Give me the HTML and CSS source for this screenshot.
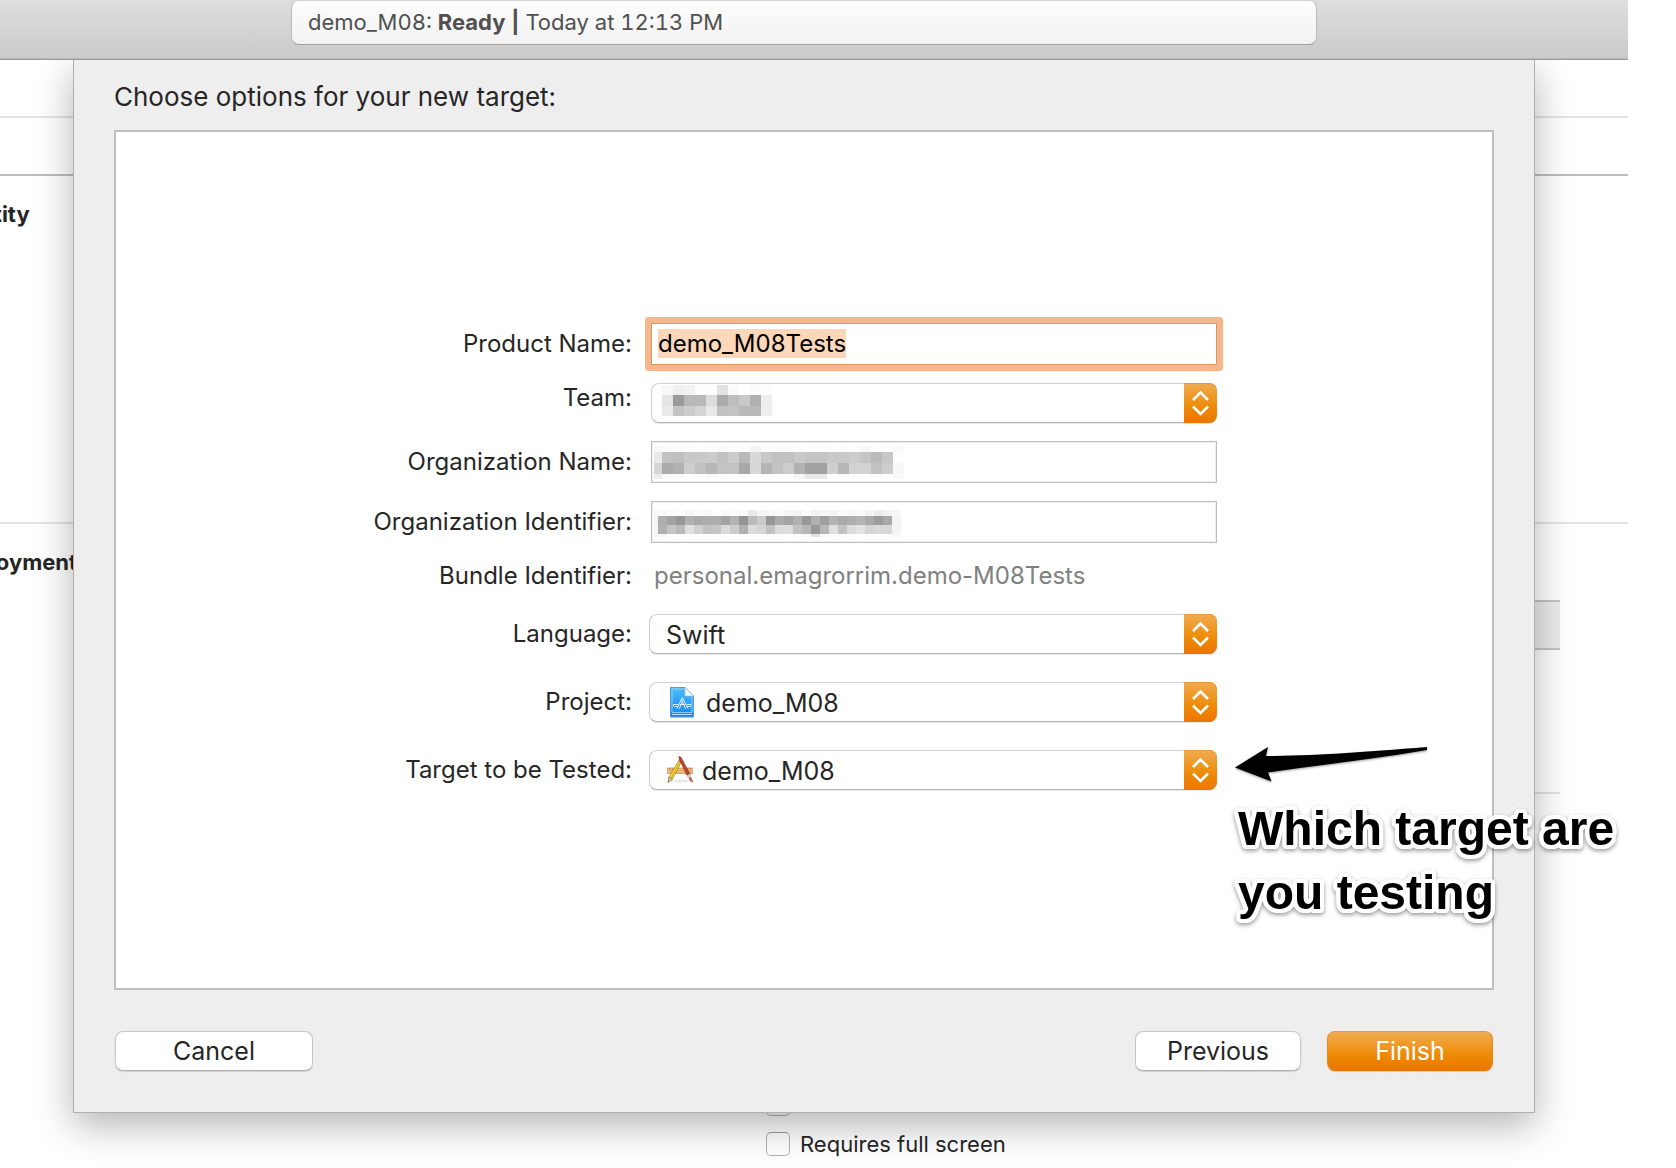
FILE: index.html
```
<!DOCTYPE html>
<html lang="en">
<head>
<meta charset="utf-8">
<title>demo_M08 – New Target</title>
<link rel="stylesheet" href="styles.css">
</head>
<body>
<div class="window">
  <header class="toolbar">
    <div class="status">demo_M08: <b>Ready |</b> Today at 12:13 PM</div>
  </header>

  <div class="stage">
    <main class="editor">
      <div class="bar"></div>
      <div class="bar bar-strong"></div>
      <section class="section section-identity">
        <h2 class="section-title">Identity</h2>
      </section>
      <section class="section">
        <h2 class="section-title">Deployment</h2>
        <div class="device-bar"></div>
        <hr class="divider">
        <div class="checks">
          <label class="check"><input type="checkbox"> Hide status bar</label>
          <label class="check"><input type="checkbox"> Requires full screen</label>
        </div>
      </section>
    </main>

    <form class="sheet">
      <h1 class="sheet-title">Choose options for your new target:</h1>
      <div class="panel">
        <div class="row">
          <label class="label" for="product">Product Name:</label>
          <div class="control inset">
            <input class="field focused" id="product" type="text" value="demo_M08Tests" spellcheck="false">
          </div>
        </div>
        <div class="row">
          <label class="label label-top" for="team">Team:</label>
          <div class="control inset">
            <select class="popup" id="team"><option></option></select>
            <svg class="mosaic" data-mosaic="team" aria-hidden="true"></svg>
            <svg class="cap" viewBox="0 0 33 40" aria-hidden="true"><path d="M9 17l7.500-7.500 7.500 7.500M9 23.500l7.500 7.500 7.500-7.500"/></svg>
          </div>
        </div>
        <div class="row">
          <label class="label" for="orgname">Organization Name:</label>
          <div class="control inset">
            <input class="field" id="orgname" type="text">
            <svg class="mosaic" data-mosaic="orgname" aria-hidden="true"></svg>
          </div>
        </div>
        <div class="row">
          <label class="label" for="orgid">Organization Identifier:</label>
          <div class="control inset">
            <input class="field" id="orgid" type="text">
            <svg class="mosaic" data-mosaic="orgid" aria-hidden="true"></svg>
          </div>
        </div>
        <div class="row row-text">
          <label class="label" for="bundle">Bundle Identifier:</label>
          <div class="control inset">
            <output class="value" id="bundle">personal.emagrorrim.demo-M08Tests</output>
          </div>
        </div>
        <div class="row row-popup">
          <label class="label" for="language">Language:</label>
          <div class="control">
            <select class="popup" id="language"><option>Swift</option></select>
            <svg class="cap" viewBox="0 0 33 40" aria-hidden="true"><path d="M9 17l7.500-7.500 7.500 7.500M9 23.500l7.500 7.500 7.500-7.500"/></svg>
          </div>
        </div>
        <div class="row row-popup">
          <label class="label" for="project">Project:</label>
          <div class="control">
            <select class="popup popup-project" id="project"><option>demo_M08</option></select>
            <svg class="icon icon-project" viewBox="0 0 24 31" aria-hidden="true">
              <defs><linearGradient id="doc" x1="0" y1="0" x2="0" y2="1"><stop offset="0" stop-color="#4dbcf5"/><stop offset="1" stop-color="#0f86fb"/></linearGradient></defs>
              <path d="M.5 .5H15L23.500 9V30H.5z" fill="url(#doc)" stroke="#4f9bd6" stroke-width="1"/>
              <path d="M14.500 2H2V25.500H22V10" fill="none" stroke="#a5dafb" stroke-width=".8"/>
              <path d="M2 27.500H22" stroke="#b9defc" stroke-width="1"/>
              <path d="M15 .5L23.500 9H15z" fill="#f4f6f8" stroke="#b9c4cc" stroke-width=".6"/>
              <path d="M7 21.500L12.300 10.500L18 21.500M9.200 21.800L13.500 12M15.500 21.800L11.200 12M3.500 17.500H8M4.500 19.500H8M17 17.500H20.500M16.500 19.500H20M9.500 17.500H15.500M3.500 17.500V19.500M20.500 17.500V19.500" fill="none" stroke="#d9f0ff" stroke-width="1"/>
            </svg>
            <svg class="cap" viewBox="0 0 33 40" aria-hidden="true"><path d="M9 17l7.500-7.500 7.500 7.500M9 23.500l7.500 7.500 7.500-7.500"/></svg>
          </div>
        </div>
        <div class="row row-popup">
          <label class="label" for="target">Target to be Tested:</label>
          <div class="control">
            <select class="popup popup-target" id="target"><option>demo_M08</option></select>
            <svg class="icon icon-target" viewBox="0 0 28 28" aria-hidden="true">
              <ellipse cx="14" cy="25" rx="11" ry="1.500" fill="#e9e9e9"/>
              <path d="M1 12H27V17.500H1z" fill="#e9b27a"/>
              <path d="M1 12H27M1 17.500H27" stroke="#c98f57" stroke-width=".7"/>
              <path d="M3.500 12V14M6.500 12V14M21.500 12V14M24.500 12V14" stroke="#b57d48" stroke-width=".6"/>
              <path d="M13.800 3L16.300 4.200L6.500 23L2 26.500L3 21z" fill="#f5d936" stroke="#8a7420" stroke-width=".6"/>
              <path d="M14.900 3.800L4.800 23" stroke="#c9a514" stroke-width=".8"/>
              <path d="M3 21L6.500 23L2 26.500z" fill="#d9c6a5" stroke="#6e6455" stroke-width=".5"/>
              <path d="M12.600 5.200L15.200 6.600L16.600 4L14 2.600z" fill="#ee5b62"/>
              <path d="M12.600 .5L15 1.200L24 18L21 19.500L14.500 6z" fill="#b8452a" stroke="#7d2c19" stroke-width=".5"/>
              <path d="M21 19.500L24 18L25 21L22.600 22z" fill="#d5d8da" stroke="#8f8f8f" stroke-width=".4"/>
              <path d="M22.600 22L25 21L27.300 26.300C25.500 26.500 23.800 25 22.600 22z" fill="#a8654c"/>
            </svg>
            <svg class="cap" viewBox="0 0 33 40" aria-hidden="true"><path d="M9 17l7.500-7.500 7.500 7.500M9 23.500l7.500 7.500 7.500-7.500"/></svg>
          </div>
        </div>
      </div>
      <footer class="actions">
        <button class="button button-cancel" type="button">Cancel</button>
        <button class="button" type="button">Previous</button>
        <button class="button button-primary" type="submit">Finish</button>
      </footer>
    </form>

    <aside class="note">
      <svg class="note-arrow" viewBox="0 0 194 38" aria-hidden="true">
        <path d="M0 21.500L33 1L31 10C75 10 130 6 192 1V4C140 13 85 19 33 26.500L36.500 35.500z"/>
      </svg>
      <p class="note-text">Which target are<br>you testing</p>
    </aside>
  </div>
</div>
<script src="script.js"></script>
</body>
</html>
```

FILE: styles.css
```
* {
  box-sizing: border-box;
}

body {
  margin: 0;
  background: #fff;
  color: #262626;
  font-family: Inter, "Liberation Sans", sans-serif;
  font-size: 24px;
  overflow: hidden;
}

.window {
  display: flex;
  flex-direction: column;
  min-height: 100vh;
}

/* Toolbar */

.toolbar {
  position: relative;
  z-index: 2;
  display: flex;
  height: 60px;
  margin-right: 48px;
  padding: 0 311px 14px 291px;
  background: linear-gradient(#dedede, #cacaca);
  border-bottom: 1px solid #9c9c9c;
  box-shadow: inset 0 -1px #b8b8b8;
}

.status {
  flex: 1;
  padding: 0 16px;
  border: 1px solid #bdbdbd;
  border-top-color: #d4d4d4;
  border-bottom-color: #a0a0a0;
  border-radius: 8px;
  background: linear-gradient(#fdfdfd, #f2f2f2);
  color: #505050;
  font-size: 22px;
  line-height: 42px;
  font-variant-numeric: tabular-nums;
}

/* Editor and sheet share one cell, the sheet on top */

.stage {
  position: relative;
  flex: 1;
  display: grid;
  grid-template-columns: minmax(0, 1fr);
  align-items: start;
}

.editor,
.sheet {
  grid-area: 1 / 1;
}

.editor {
  margin-right: 48px;
}

.bar {
  height: 58px;
  border-bottom: 2px solid #e3e3e3;
}

.bar-strong {
  border-bottom-color: #bdbdbd;
}

.section {
  padding-top: 23px;
}

.section-identity {
  padding-bottom: 293px;
  border-bottom: 2px solid #e3e3e3;
}

.section-title {
  margin: 0 0 0 -53px;
  font-size: 22px;
  line-height: 30px;
}

.device-bar {
  height: 50px;
  margin: 23px 68px 0 120px;
  border: solid #c4c4c4;
  border-width: 2px 0;
  background: #ececec;
}

.divider {
  height: 2px;
  margin: 142px 68px 0 120px;
  border: 0;
  background: #e3e3e3;
}

.checks {
  display: flex;
  flex-direction: column;
  gap: 16px;
  margin: 298px 0 0 766px;
}

.check {
  display: flex;
  align-items: center;
  gap: 10px;
  font-size: 22px;
  line-height: 24px;
}

.check input {
  appearance: none;
  width: 24px;
  height: 24px;
  margin: 0;
  border: 1px solid #b0b0b0;
  border-top-color: #9a9a9a;
  border-radius: 5px;
  background: #fff;
}

/* Sheet */

.sheet {
  z-index: 1;
  margin: 0 141px 0 73px;
  padding: 19px 40px 41px;
  border: solid #b0b0b0;
  border-width: 0 1px 1px;
  background: #eee;
  box-shadow: 0 12px 36px rgba(0, 0, 0, 0.3);
}

.sheet-title {
  margin: 0 0 15px;
  font-size: 26px;
  font-weight: 400;
  line-height: 36px;
}

.panel {
  display: flex;
  flex-direction: column;
  gap: 18px;
  padding: 191px 0 198px;
  border: 2px solid #bfbfbf;
  background: #fff;
}

.row {
  display: grid;
  grid-template-columns: 516fr 568fr 258fr;
  column-gap: 17px;
  align-items: center;
}

.row-text {
  margin-bottom: 5px;
}

.row-popup + .row-popup {
  margin-top: 10px;
}

.label {
  text-align: right;
  line-height: 30px;
}

.label-top {
  align-self: start;
}

.control {
  display: grid;
  grid-template-columns: minmax(0, 1fr);
  align-items: center;
}

.control > * {
  grid-area: 1 / 1;
}

.inset {
  margin-left: 2px;
}

.field {
  width: 100%;
  height: 42px;
  margin: 0;
  padding: 0 6px 2px;
  border: 1px solid #bcbcbc;
  border-radius: 0;
  outline: 0;
  background: #fff;
  box-shadow: inset 0 0 0 1px #f0f0f0;
  color: #000;
  font: 24px/30px Inter, "Liberation Sans", sans-serif;
}

.focused {
  border-color: #d4946c;
  box-shadow: 0 0 0 6px #f5b68c;
  border-radius: 1px;
}

.field::selection {
  background: #fdd7b9;
  color: #000;
}

.value {
  padding-left: 3px;
  color: #808080;
  line-height: 30px;
}

.popup {
  appearance: none;
  width: 100%;
  height: 40px;
  margin: 0;
  padding: 2px 40px 0 16px;
  border: 1px solid #cfcfcf;
  border-bottom-color: #b4b4b4;
  border-radius: 8px;
  background: #fff;
  box-shadow: 0 1px 1px rgba(0, 0, 0, 0.1);
  color: #262626;
  font: 25px/36px Inter, "Liberation Sans", sans-serif;
}

.popup-project {
  padding-left: 56px;
}

.popup-target {
  padding-left: 52px;
}

.cap {
  justify-self: end;
  width: 33px;
  height: 40px;
  border-radius: 0 8px 8px 0;
  background: linear-gradient(#efac52, #ed8a06 60%, #ee7500);
  box-shadow: inset 0 1px #e6993c;
  pointer-events: none;
}

.cap path {
  fill: none;
  stroke: #fff;
  stroke-width: 2.600;
}

.icon {
  pointer-events: none;
}

.icon-project {
  width: 24px;
  height: 31px;
  margin-left: 21px;
}

.icon-target {
  width: 28px;
  height: 28px;
  margin-left: 17px;
}

.mosaic {
  align-self: start;
  width: 300px;
  height: 40px;
  pointer-events: none;
}

.actions {
  display: flex;
  gap: 26px;
  margin: 41px 1px 0;
}

.button {
  width: 166px;
  height: 40px;
  padding: 0;
  border: 1px solid #c6c6c6;
  border-bottom-color: #b0b0b0;
  border-radius: 8px;
  background: #fff;
  box-shadow: 0 1px 1px rgba(0, 0, 0, 0.12);
  color: #262626;
  font: 25px/36px Inter, "Liberation Sans", sans-serif;
}

.button-cancel {
  width: 198px;
  margin-right: auto;
}

.button-primary {
  border-color: #e6993c #e88a1c #e27000;
  background: linear-gradient(#efac52, #ed8a06 60%, #ee7500);
  color: #fff;
}

/* Annotation laid over the sheet */

.note {
  position: absolute;
  z-index: 3;
  top: 686px;
  left: 1235px;
}

.note-arrow {
  display: block;
  width: 194px;
  height: 38px;
  filter: drop-shadow(0 1px 1px rgba(0, 0, 0, 0.4));
}

.note-text {
  margin: 13px 0 0 3px;
  color: #000;
  font: bold 48px/64px "Liberation Sans", Arial, sans-serif;
  white-space: nowrap;
  text-shadow:
    4px 0 #fff, -4px 0 #fff, 0 4px #fff, 0 -4px #fff,
    3px 3px #fff, -3px 3px #fff, 3px -3px #fff, -3px -3px #fff,
    4px 2px #fff, -4px 2px #fff, 4px -2px #fff, -4px -2px #fff,
    2px 4px #fff, -2px 4px #fff, 2px -4px #fff, -2px -4px #fff;
  filter: drop-shadow(0 2px 2px rgba(0, 0, 0, 0.4));
}
```

FILE: script.js
```
// Redacted values: columns start at `xs`, rows at `ys`, one two-digit grey per cell.
const steps = (first, start, size, count) =>
  [...(first === null ? [] : [first]), ...Array.from({ length: count + 1 }, (_, i) => start + i * size)];

const mosaics = {
  team: {
    xs: steps(null, 11, 11, 10),
    ys: [2, 12, 23, 33],
    rows: [
      'f7 ef f1 fc fc e2 fa ff fb fc',
      'e4 9b b8 b8 dc ab be c9 b0 ee',
      'ea c4 cc d4 e8 c1 c3 b9 b9 ee'
    ]
  },
  orgname: {
    xs: steps(3, 11, 11, 22),
    ys: [5, 11, 22, 33, 38],
    rows: [
      'f7 fb fb fd fc fd f9 fd fd f4 fd fb fa fc fd fd fd fb fc f7 fc fe f9',
      'e8 c2 c0 c8 c8 cc c2 cc b9 d8 c8 c1 c1 c9 c5 c5 c9 c9 cc c5 bb c8 fd',
      'd5 aa b1 ce c1 b7 c3 c3 a8 d8 b5 c3 cc b2 a2 a2 cf b7 d2 d2 c1 cc f7',
      'ee f8 fb fd fb f9 fb fd fd fd fc fd fd f7 e8 e8 fd fb fd fd fc fd f8'
    ]
  },
  orgid: {
    xs: steps(3, 7, 9, 27),
    ys: [9, 15, 24, 33, 36],
    rows: [
      'f6 f9 fb fd f6 fa f8 fd fa fd f9 e9 f5 f8 fc f6 f3 fb f3 f7 f4 fb f7 fb f4 ec f3 f7',
      'f5 ae a3 97 b1 a9 ad ad a3 b3 94 bb cb 97 ab a3 b1 99 b1 9f b3 aa ae b5 a9 9c a9 f4',
      'f5 b1 c5 bb e0 d1 c1 c5 da cc b1 dc d6 c2 dc de c3 b7 99 b7 e0 c3 dc e3 d4 d8 d8 f4',
      'f6 f8 fd fe fd fd fd fd fc fd fd fd fd fd fd fe fc fb e4 fb fd fc fd fe fd fd fd f8'
    ]
  }
};

for (const svg of document.querySelectorAll('.mosaic')) {
  const { xs, ys, rows } = mosaics[svg.dataset.mosaic];
  rows.forEach((row, r) => row.split(' ').forEach((grey, c) => {
    const rect = document.createElementNS('http://www.w3.org/2000/svg', 'rect');
    rect.setAttribute('x', xs[c]);
    rect.setAttribute('y', ys[r]);
    rect.setAttribute('width', xs[c + 1] - xs[c]);
    rect.setAttribute('height', ys[r + 1] - ys[r]);
    rect.setAttribute('fill', '#' + grey.repeat(3));
    svg.append(rect);
  }));
}

document.getElementById('product').select();
```
